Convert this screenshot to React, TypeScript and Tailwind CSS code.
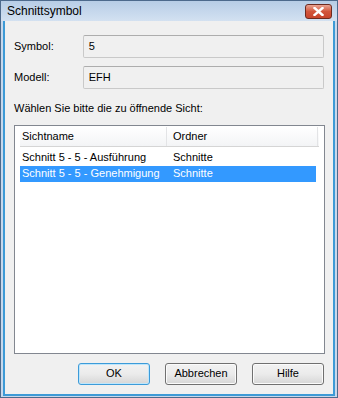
import React from "react";

const font = { fontFamily: "Tahoma, 'Liberation Sans', Arial, sans-serif" };

function CloseButton() {
  return (
    <div className="flex h-[15px] w-[27px] items-center justify-center rounded-[3px] border border-[#6d2a1f] bg-gradient-to-b from-[#e8a493] via-[#d2553b] to-[#c8452c]">
      <svg width="11" height="9" viewBox="0 0 11 9">
        <path d="M1.5 1 L9.5 8 M9.5 1 L1.5 8" stroke="#fff" strokeWidth="2.4" strokeLinecap="square" />
      </svg>
    </div>
  );
}

function Field({ label, value }: { label: string; value: string }) {
  return (
    <div className="flex items-center">
      <div className="w-[69px] text-[11px] text-black">{label}</div>
      <div className="flex h-[23px] w-[242px] items-center rounded-[2px] border border-[#c9c9c9] border-t-[#adadad] bg-[#f0f0f0] px-[5px] text-[11px] text-black">
        {value}
      </div>
    </div>
  );
}

function Button({ children, primary }: { children: React.ReactNode; primary?: boolean }) {
  return (
    <div
      className={`flex h-[22px] w-[72px] items-center justify-center rounded-[3px] border bg-gradient-to-b from-[#f2f2f2] via-[#ebebeb] to-[#d6d6d6] text-[11px] text-black ${
        primary ? "border-[#3c9bd9] shadow-[inset_0_0_0_1px_#bfe6fb]" : "border-[#707070] shadow-[inset_0_0_0_1px_#fbfbfb]"
      }`}
    >
      {children}
    </div>
  );
}

export default function App() {
  return (
    <div style={font} className="flex h-[398px] w-[338px] flex-col overflow-hidden border border-[#4d6a8c] bg-[#c7d8ec]">
      <div className="flex h-[20px] flex-none items-center justify-between bg-gradient-to-b from-[#b7cde6] to-[#d3e1f1] pl-[6px] pr-[5px]">
        <span className="text-[12px] text-black">Schnittsymbol</span>
        <CloseButton />
      </div>
      <div className="mx-[2px] mb-[1px] flex flex-1 flex-col border-x-2 border-b-2 border-[#3d9ad6] bg-[#f0f0f0] px-[9px] pt-[14px]">
        <div className="flex flex-col gap-[8px]">
          <Field label="Symbol:" value="5" />
          <Field label="Modell:" value="EFH" />
        </div>
        <div className="mt-[11px] text-[11px] text-black">Wählen Sie bitte die zu öffnende Sicht:</div>
        <div className="mt-[8px] flex h-[229px] w-[311px] flex-col border border-[#828790] bg-white px-[5px] pt-[1px]">
          <div className="flex h-[20px] border-b border-[#d5d5d5] bg-gradient-to-b from-white to-[#f3f4f6] text-[11px] text-black">
            <div className="flex w-[147px] items-center border-r border-[#e3e4e6] pl-[2px]">Sichtname</div>
            <div className="flex w-[150px] items-center pl-[6px]">Ordner</div>
            <div className="border-l border-[#e3e4e6]" />
          </div>
          <div className="mt-[2px] flex h-[17px] items-center whitespace-nowrap text-[11px] text-black">
            <div className="w-[147px] pl-[2px]">Schnitt 5 - 5 - Ausführung</div>
            <div className="pl-[6px]">Schnitte</div>
          </div>
          <div className="flex h-[16px] w-[296px] items-center whitespace-nowrap bg-[#3399ff] text-[11px] text-white">
            <div className="w-[147px] pl-[2px]">Schnitt 5 - 5 - Genehmigung</div>
            <div className="pl-[6px]">Schnitte</div>
          </div>
        </div>
        <div className="mt-[9px] flex justify-end gap-[15px]">
          <Button primary>OK</Button>
          <Button>Abbrechen</Button>
          <Button>Hilfe</Button>
        </div>
      </div>
    </div>
  );
}
